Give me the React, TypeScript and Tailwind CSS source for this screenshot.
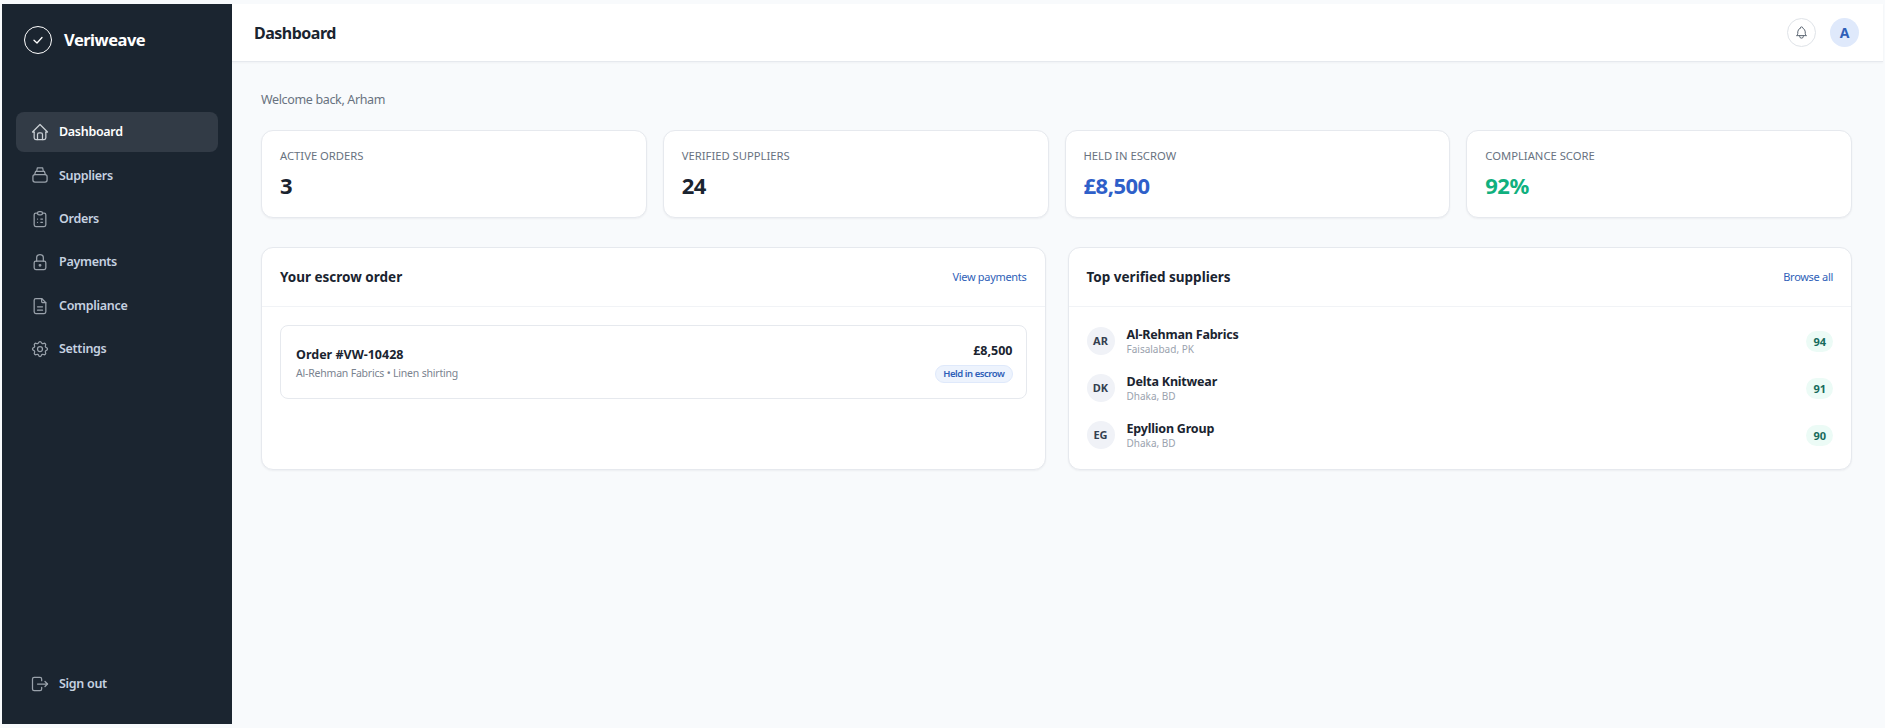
import { TbBell, TbClipboardList, TbFileDescription, TbHome, TbLock, TbLogout, TbSettings } from 'react-icons/tb';
import type { ReactNode } from 'react';

function StackIcon() {
  return (
    <svg width="20" height="20" viewBox="0 0 24 24" fill="none" stroke="currentColor" strokeWidth="1.5" strokeLinecap="round" strokeLinejoin="round">
      <rect x="3.5" y="11.5" width="17" height="9" rx="2.5" />
      <path d="M5.5 11.5 6.8 7.5h10.4l1.3 4" />
      <path d="M8 7.5 8.8 3.5h6.4l.8 4" />
    </svg>
  );
}

const navItems: { label: string; icon: ReactNode; active?: boolean }[] = [
  { label: 'Dashboard', icon: <TbHome size={20} strokeWidth={1.5} />, active: true },
  { label: 'Suppliers', icon: <StackIcon /> },
  { label: 'Orders', icon: <TbClipboardList size={20} strokeWidth={1.5} /> },
  { label: 'Payments', icon: <TbLock size={20} strokeWidth={1.5} /> },
  { label: 'Compliance', icon: <TbFileDescription size={20} strokeWidth={1.5} /> },
  { label: 'Settings', icon: <TbSettings size={20} strokeWidth={1.5} /> },
];

const stats = [
  { label: 'ACTIVE ORDERS', value: '3', color: 'text-[#1a2430]' },
  { label: 'VERIFIED SUPPLIERS', value: '24', color: 'text-[#1a2430]' },
  { label: 'HELD IN ESCROW', value: '£8,500', color: 'text-[#2f5fc9]' },
  { label: 'COMPLIANCE SCORE', value: '92%', color: 'text-[#10b07e]' },
];

const suppliers = [
  { initials: 'AR', name: 'Al-Rehman Fabrics', place: 'Faisalabad, PK', score: 94 },
  { initials: 'DK', name: 'Delta Knitwear', place: 'Dhaka, BD', score: 91 },
  { initials: 'EG', name: 'Epyllion Group', place: 'Dhaka, BD', score: 90 },
];

function NavRow({ label, icon, active }: { label: string; icon: ReactNode; active?: boolean }) {
  return (
    <div
      className={`flex h-10 items-center gap-[9px] rounded-lg pl-3.5 text-[12.5px] font-semibold tracking-[-0.3px] ${
        active ? 'bg-[#323b46] text-white' : 'text-[#c6d2e0]'
      }`}
    >
      <span className={active ? 'text-[#c9ced4]' : 'text-[#9aa2ab]'}>{icon}</span>
      <span className="mt-px">{label}</span>
    </div>
  );
}

function Panel({ title, link, children }: { title: string; link: string; children: ReactNode }) {
  return (
    <section className="h-[223px] rounded-xl border border-[#e6e9ee] bg-white shadow-[0_1px_2px_rgba(16,24,40,0.05)]">
      <div className="flex h-[59px] items-center justify-between border-b border-[#f1f3f6] px-[18px]">
        <h2 className="text-[13.5px] font-bold text-[#1a2430]">{title}</h2>
        <a className="text-[11px] tracking-[-0.3px] text-[#2f5fb8]">{link}</a>
      </div>
      {children}
    </section>
  );
}

export default function App() {
  return (
    <div className="flex h-[728px] bg-[#f8fafc] py-1 pl-0.5 font-['Noto_Sans',sans-serif]">
      <aside className="flex w-[230px] shrink-0 flex-col bg-[#1b2530] px-3.5">
        <div className="flex h-[74px] items-center gap-3 pb-0.5 pl-2">
          <span className="flex size-7 items-center justify-center rounded-full border border-white text-white">
            <svg width="12" height="12" viewBox="0 0 24 24" fill="none" stroke="currentColor" strokeWidth="2.6" strokeLinecap="round" strokeLinejoin="round">
              <path d="M4 12.5 10 18 20 7" />
            </svg>
          </span>
          <span className="text-[16.5px] font-bold tracking-[-0.5px] text-white">Veriweave</span>
        </div>
        <nav className="mt-[34px] flex flex-col gap-[3.4px]">
          {navItems.map((item) => (
            <NavRow key={item.label} {...item} />
          ))}
        </nav>
        <div className="mt-auto mb-5">
          <NavRow label="Sign out" icon={<TbLogout size={20} strokeWidth={1.5} />} />
        </div>
      </aside>

      <div className="flex min-w-0 flex-1 flex-col pr-0.5">
        <header className="flex h-[58px] shrink-0 items-center justify-between border-b border-[#e6e9ee] bg-white pr-6 pl-[22px] shadow-[0_1px_2px_rgba(16,24,40,0.04)]">
          <h1 className="text-base font-bold tracking-[-0.5px] text-[#1a2430]">Dashboard</h1>
          <div className="flex items-center gap-[14px]">
            <span className="flex size-[29px] items-center justify-center rounded-full border border-[#dfe3e8] text-[#5b6572]">
              <TbBell size={15} strokeWidth={1.6} />
            </span>
            <span className="flex size-[29px] items-center justify-center rounded-full bg-[#dfe9fb] text-sm font-bold text-[#2f5fb8]">A</span>
          </div>
        </header>

        <main className="flex-1 pt-[29px] pr-[31px] pl-[29px]">
          <p className="text-[12.5px] leading-[18px] tracking-[-0.35px] text-[#68727f]">Welcome back, Arham</p>
          <div className="mt-[21px] grid grid-cols-4 gap-4">
            {stats.map((stat) => (
              <div key={stat.label} className="h-[88px] rounded-xl border border-[#e6e9ee] bg-white px-[18px] pt-[17px] shadow-[0_1px_2px_rgba(16,24,40,0.05)]">
                <div className="text-[11.25px] leading-4 text-[#68727f]">{stat.label}</div>
                <div className={`mt-[6px] text-[22px] leading-[30px] font-bold tracking-[-0.5px] ${stat.color}`}>{stat.value}</div>
              </div>
            ))}
          </div>

          <div className="mt-[29px] grid grid-cols-2 gap-[22px]">
            <Panel title="Your escrow order" link="View payments">
              <div className="p-[18px]">
                <div className="flex h-[74px] items-center justify-between rounded-lg border border-[#e6e9ee] pr-[13px] pl-[15px]">
                  <div>
                    <div className="mt-0.5 text-[12.5px] leading-[18px] font-bold text-[#1a2430]">Order #VW-10428</div>
                    <div className="mt-px text-[10.5px] leading-4 tracking-[-0.2px] text-[#7a838f]">Al-Rehman Fabrics • Linen shirting</div>
                  </div>
                  <div className="flex flex-col items-end">
                    <div className="text-[12.5px] leading-[18px] font-bold text-[#1a2430]">£8,500</div>
                    <span className="mt-[5px] rounded-full border border-[#dfe9fb] bg-[#edf3fd] px-[7px] text-[9.5px] leading-4 font-semibold tracking-[-0.45px] text-[#2f5fb8]">Held in escrow</span>
                  </div>
                </div>
              </div>
            </Panel>

            <Panel title="Top verified suppliers" link="Browse all">
              <div className="flex flex-col gap-[19px] px-[18px] pt-[20px]">
                {suppliers.map((s) => (
                  <div key={s.initials} className="flex h-7 items-center justify-between">
                    <div className="flex items-center gap-[12px]">
                      <span className="flex size-7 items-center justify-center rounded-full bg-[#f0f2f7] text-[11px] font-bold text-[#344050]">{s.initials}</span>
                      <div>
                        <div className="text-[12.5px] leading-[18px] font-bold tracking-[-0.2px] text-[#1a2430]">{s.name}</div>
                        <div className="-mt-0.5 text-[10px] leading-[14px] text-[#9aa2ae]">{s.place}</div>
                      </div>
                    </div>
                    <span className="rounded-full bg-[#ecfbf6] px-[7px] text-[11px] leading-[21px] font-bold text-[#176b5c]">{s.score}</span>
                  </div>
                ))}
              </div>
            </Panel>
          </div>
        </main>
      </div>
    </div>
  );
}
